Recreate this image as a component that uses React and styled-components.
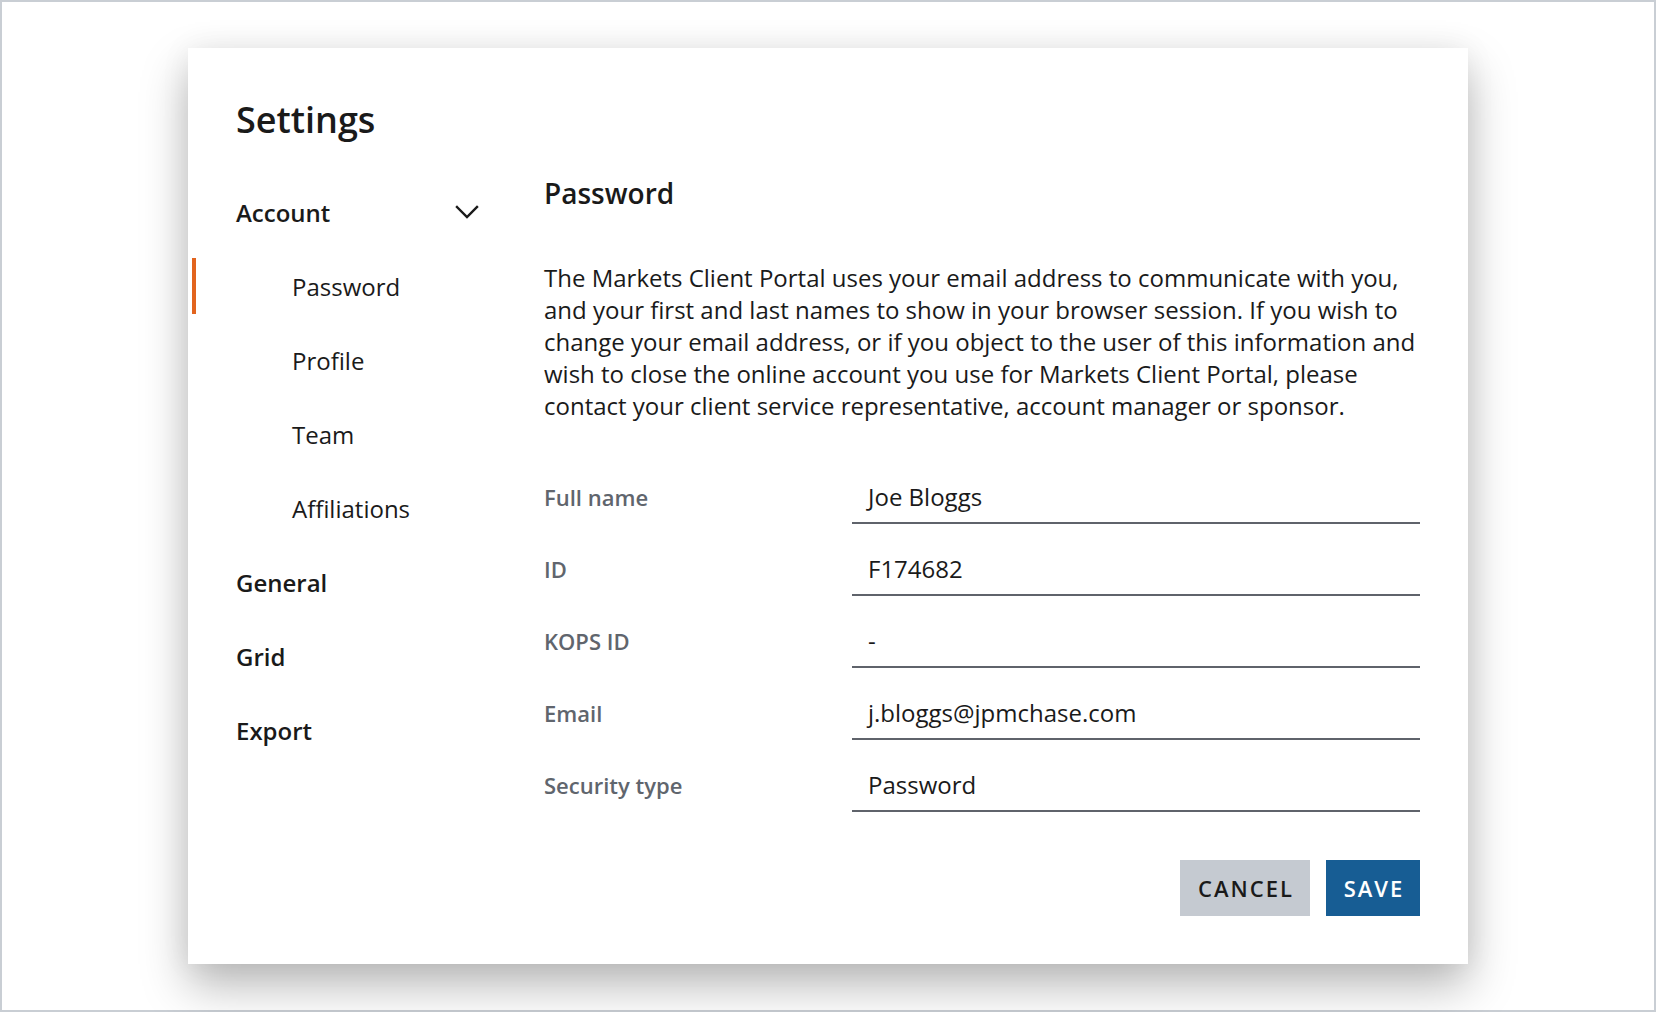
import React from 'react';
import styled, { createGlobalStyle } from 'styled-components';

const GlobalStyle = createGlobalStyle`
    html, body {
        margin: 0;
        padding: 0;
        background: #ffffff;
    }
    * {
        box-sizing: border-box;
    }
`;

const Frame = styled.div`
    width: 100vw;
    height: 100vh;
    border: 2px solid #c9ced4;
    display: flex;
    align-items: center;
    justify-content: center;
    font-family: "Open Sans", "Noto Sans", sans-serif;
    color: #1a1a1a;
`;

const Dialog = styled.div`
    width: 1280px;
    height: 916px;
    background: #ffffff;
    box-shadow: 0 22px 44px rgba(0, 0, 0, 0.28), 0 0 30px rgba(0, 0, 0, 0.06);
    padding: 48px 48px 48px 0;
    display: flex;
    flex-direction: column;
`;

const Title = styled.h1`
    margin: 0;
    padding-left: 48px;
    font-size: 36px;
    line-height: 48px;
    font-weight: 600;
    color: #1a1a1a;
`;

const Body = styled.div`
    margin-top: 32px;
    display: flex;
    gap: 64px;
    flex: 1;
`;

const Nav = styled.nav`
    width: 292px;
    margin-top: -1px;
    display: flex;
    flex-direction: column;
`;

const NavItem = styled.div`
    position: relative;
    height: 74px;
    display: flex;
    align-items: center;
    justify-content: space-between;
    padding-left: ${(p) => (p.$sub ? '104px' : '48px')};
    font-size: 24px;
    font-weight: ${(p) => (p.$sub ? 400 : 600)};
    color: #1a1a1a;
    cursor: pointer;

    &::before {
        content: '';
        display: ${(p) => (p.$active ? 'block' : 'none')};
        position: absolute;
        left: 4px;
        top: 9px;
        width: 4px;
        height: 56px;
        background: #e2641e;
    }
`;

const Chevron = styled.svg`
    width: 26px;
    height: 26px;
    margin-right: 0;
`;

const Content = styled.div`
    flex: 1;
    display: flex;
    flex-direction: column;
`;

const Heading = styled.h2`
    margin: 0;
    font-size: 28px;
    line-height: 34px;
    font-weight: 600;
    color: #1a1a1a;
`;

const Paragraph = styled.p`
    margin: 52px 0 0;
    font-size: 24px;
    line-height: 32px;
    color: #1a1a1a;
    white-space: nowrap;
`;

const Form = styled.div`
    margin-top: 52px;
    display: flex;
    flex-direction: column;
    gap: 22px;
`;

const Row = styled.div`
    display: grid;
    grid-template-columns: 308px 1fr;
    align-items: center;
    height: 50px;
`;

const Label = styled.div`
    font-size: 22px;
    font-weight: 600;
    color: #60656d;
    padding-bottom: 4px;
`;

const Field = styled.div`
    height: 50px;
    border-bottom: 2px solid #5f636b;
    padding-left: 16px;
    padding-bottom: 4px;
    display: flex;
    align-items: center;
    font-size: 24px;
    color: #1a1a1a;
`;

const Actions = styled.div`
    margin-top: auto;
    display: flex;
    justify-content: flex-end;
    gap: 16px;
`;

const Button = styled.button`
    height: 56px;
    min-width: ${(p) => (p.$primary ? '94px' : '130px')};
    padding: 0 14px 0 16px;
    border: none;
    border-radius: 0;
    background: ${(p) => (p.$primary ? '#175d94' : '#c5cad1')};
    color: ${(p) => (p.$primary ? '#ffffff' : '#1a1a1a')};
    font-family: "Open Sans", "Noto Sans", sans-serif;
    font-size: 22px;
    font-weight: 600;
    letter-spacing: 2px;
    text-transform: uppercase;
    cursor: pointer;
`;

const fields = [
    { label: 'Full name', value: 'Joe Bloggs' },
    { label: 'ID', value: 'F174682' },
    { label: 'KOPS ID', value: '-' },
    { label: 'Email', value: 'j.bloggs@jpmchase.com' },
    { label: 'Security type', value: 'Password' },
];

const App = () => {
    return (
        <>
            <GlobalStyle />
            <Frame>
                <Dialog>
                    <Title>Settings</Title>
                    <Body>
                        <Nav>
                            <NavItem>
                                Account
                                <Chevron viewBox="0 0 26 26" fill="none" stroke="#1a1a1a" strokeWidth="2.4" strokeLinecap="square">
                                    <polyline points="3,8 13,18 23,8" />
                                </Chevron>
                            </NavItem>
                            <NavItem $sub $active>Password</NavItem>
                            <NavItem $sub>Profile</NavItem>
                            <NavItem $sub>Team</NavItem>
                            <NavItem $sub>Affiliations</NavItem>
                            <NavItem>General</NavItem>
                            <NavItem>Grid</NavItem>
                            <NavItem>Export</NavItem>
                        </Nav>
                        <Content>
                            <Heading>Password</Heading>
                            <Paragraph>
                                The Markets Client Portal uses your email address to communicate with you,<br />
                                and your first and last names to show in your browser session. If you wish to<br />
                                change your email address, or if you object to the user of this information and<br />
                                wish to close the online account you use for Markets Client Portal, please<br />
                                contact your client service representative, account manager or sponsor.
                            </Paragraph>
                            <Form>
                                {fields.map((f) => (
                                    <Row key={f.label}>
                                        <Label>{f.label}</Label>
                                        <Field>{f.value}</Field>
                                    </Row>
                                ))}
                            </Form>
                            <Actions>
                                <Button>Cancel</Button>
                                <Button $primary>Save</Button>
                            </Actions>
                        </Content>
                    </Body>
                </Dialog>
            </Frame>
        </>
    );
};

export default App;
